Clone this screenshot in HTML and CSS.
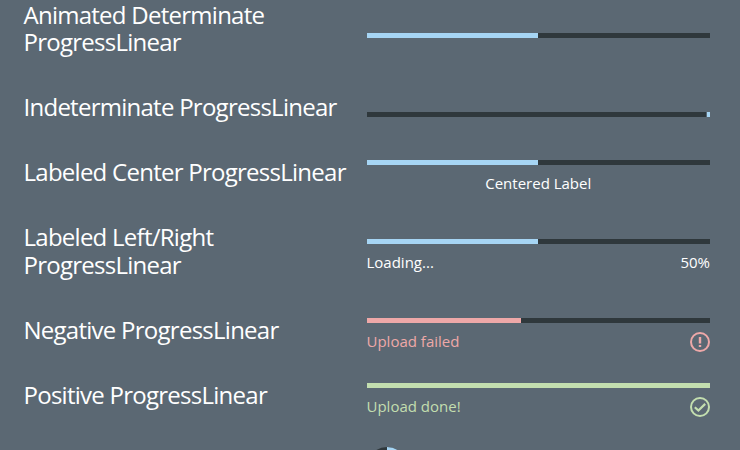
FILE: index.html
```html
<!DOCTYPE html>
<html lang="en">
<head>
<meta charset="utf-8">
<title>Progress</title>
<link rel="stylesheet" href="styles.css">
</head>
<body>
<main class="list">
  <section class="row row--double">
    <h2 class="title">Animated Determinate ProgressLinear</h2>
    <div class="progress progress--plain"><div class="track"><div class="fill" style="width:171px"></div></div></div>
  </section>
  <section class="row">
    <h2 class="title">Indeterminate ProgressLinear</h2>
    <div class="progress progress--plain"><div class="track track--moving"><div class="fill" style="width:3px"></div></div></div>
  </section>
  <section class="row">
    <h2 class="title">Labeled Center ProgressLinear</h2>
    <div class="progress"><div class="track"><div class="fill" style="width:171px"></div></div>
      <div class="labels labels--center"><span>Centered Label</span></div></div>
  </section>
  <section class="row row--double">
    <h2 class="title title--loose">Labeled Left/Right ProgressLinear</h2>
    <div class="progress"><div class="track"><div class="fill" style="width:171px"></div></div>
      <div class="labels"><span>Loading...</span><span>50%</span></div></div>
  </section>
  <section class="row">
    <h2 class="title title--status">Negative ProgressLinear</h2>
    <div class="progress progress--negative"><div class="track"><div class="fill" style="width:154px"></div></div>
      <div class="labels"><span>Upload failed</span>
        <svg class="icon" viewBox="0 0 20 20"><circle cx="10" cy="10" r="9"/><path d="M10 5v6.5M10 13v2" stroke-width="2.4"/></svg></div></div>
  </section>
  <section class="row">
    <h2 class="title title--status">Positive ProgressLinear</h2>
    <div class="progress progress--positive"><div class="track"><div class="fill" style="width:343px"></div></div>
      <div class="labels"><span>Upload done!</span>
        <svg class="icon" viewBox="0 0 20 20"><circle cx="10" cy="10" r="9"/><path d="M4.8 10.2l3.6 3.3 6.8-6.6" stroke-width="2.2"/></svg></div></div>
  </section>
  <section class="row row--last">
    <div></div>
    <svg class="ring" viewBox="0 0 40 40"><circle class="ring-track" cx="20" cy="20" r="17.5"/><path class="ring-value" d="M20 2.5a17.5 17.5 0 0 1 0 35"/></svg>
  </section>
</main>
</body>
</html>
```

FILE: styles.css
```css
body {
  margin: 0;
  background: #5b6873;
  color: #fff;
  font-family: "Open Sans", sans-serif;
}
.list {
  box-sizing: border-box;
  height: 450px;
  overflow: hidden;
  padding: 1px 30px 0 23.5px;
}
.row {
  display: grid;
  grid-template-columns: 343px 343px;
  align-items: start;
  height: 65px;
}
.row--double { height: 92px; }
.title {
  margin: 0;
  font-size: 24px;
  line-height: 27.4px;
  font-weight: 400;
  letter-spacing: -0.74px;
}
.title--loose { line-height: 28px; }
.title--status { padding-top: 1px; }
.progress {
  --accent: #a6d5f4;
  margin: 2px -0.5px 0 0.5px;
}
.row--double .progress { margin-top: 16px; }
.progress--plain { margin-top: 19px; }
.row--double .progress--plain { margin-top: 32px; }
.track {
  display: flex;
  height: 5px;
  background: #2f383c;
}
.track--moving { justify-content: flex-end; }
.track--moving .fill { border-left: 1px solid #5b6873; }
.fill { height: 5px; background: var(--accent); }
.labels {
  display: flex;
  justify-content: space-between;
  margin: 7px 0 0 -0.5px;
  font-size: 15px;
  line-height: 22px;
}
.labels--center { justify-content: center; }
.progress--negative, .progress--positive { margin-top: 3px; }
.progress--negative { --accent: #eea8a8; }
.progress--positive { --accent: #c3deaf; }
.progress--negative .labels, .progress--positive .labels { color: var(--accent); }
.icon {
  width: 20px;
  height: 20px;
  margin-top: 2px;
  fill: none;
  stroke: currentColor;
  stroke-width: 2;
}
.row--last { padding-top: 2px; }
.ring { width: 40px; height: 40px; fill: none; stroke-width: 5; }
.ring-track { stroke: #2f383c; }
.ring-value { stroke: #a6d5f4; }
```
